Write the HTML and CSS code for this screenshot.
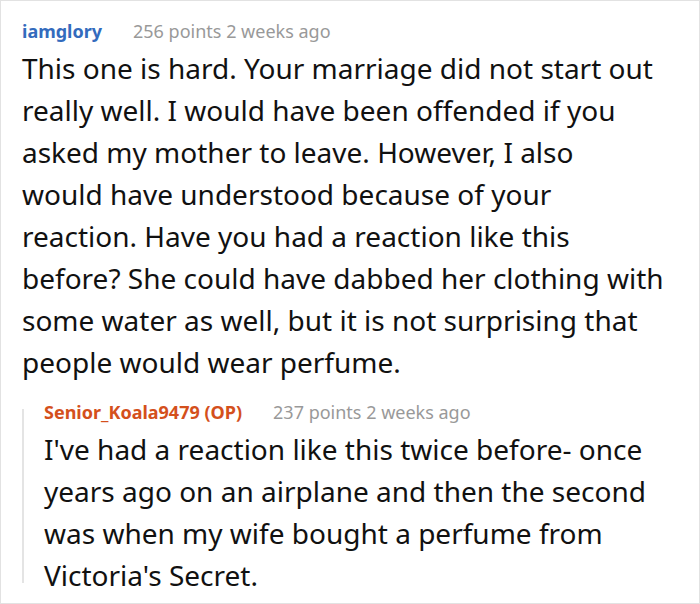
FILE: index.html
```html
<!DOCTYPE html>
<html>
<head>
<meta charset="utf-8">
<link rel="stylesheet" href="styles.css">
</head>
<body>
<div class="card">
  <div class="comment">
    <div class="head"><span class="user">iamglory</span><span class="meta">256 points 2 weeks ago</span></div>
    <div class="text">This one is hard. Your marriage did not start out<br>really well. I would have been offended if you<br>asked my mother to leave. However, I also<br>would have understood because of your<br>reaction. Have you had a reaction like this<br>before? She could have dabbed her clothing with<br>some water as well, but it is not surprising that<br>people would wear perfume.</div>
    <div class="reply">
      <div class="head"><span class="user op">Senior_Koala9479 (OP)</span><span class="meta">237 points 2 weeks ago</span></div>
      <div class="text">I've had a reaction like this twice before- once<br>years ago on an airplane and then the second<br>was when my wife bought a perfume from<br>Victoria's Secret.</div>
    </div>
  </div>
</div>
</body>
</html>
```
FILE: styles.css
```css
html, body {
  margin: 0;
  padding: 0;
  background: #fff;
}
.card {
  box-sizing: border-box;
  width: 700px;
  height: 604px;
  border: 1px solid #e2e2e2;
  font-family: "Noto Sans", "Open Sans", sans-serif;
  color: #111;
  overflow: hidden;
}
.comment {
  padding: 14px 4px 0 21px;
}
.head {
  font-size: 18px;
  line-height: 32px;
  height: 32px;
  white-space: nowrap;
}
.user {
  font-weight: bold;
  color: #336bbd;
}
.user.op {
  color: #d4501c;
}
.meta {
  color: #999;
  margin-left: 31px;
}
.text {
  font-size: 28px;
  line-height: 42px;
  white-space: nowrap;
}
.reply {
  position: relative;
  margin-top: 13px;
  padding-left: 22px;
}
.reply::before {
  content: "";
  position: absolute;
  left: 0;
  top: 13px;
  bottom: 13px;
  width: 2px;
  background: #e4e4e4;
}
```
